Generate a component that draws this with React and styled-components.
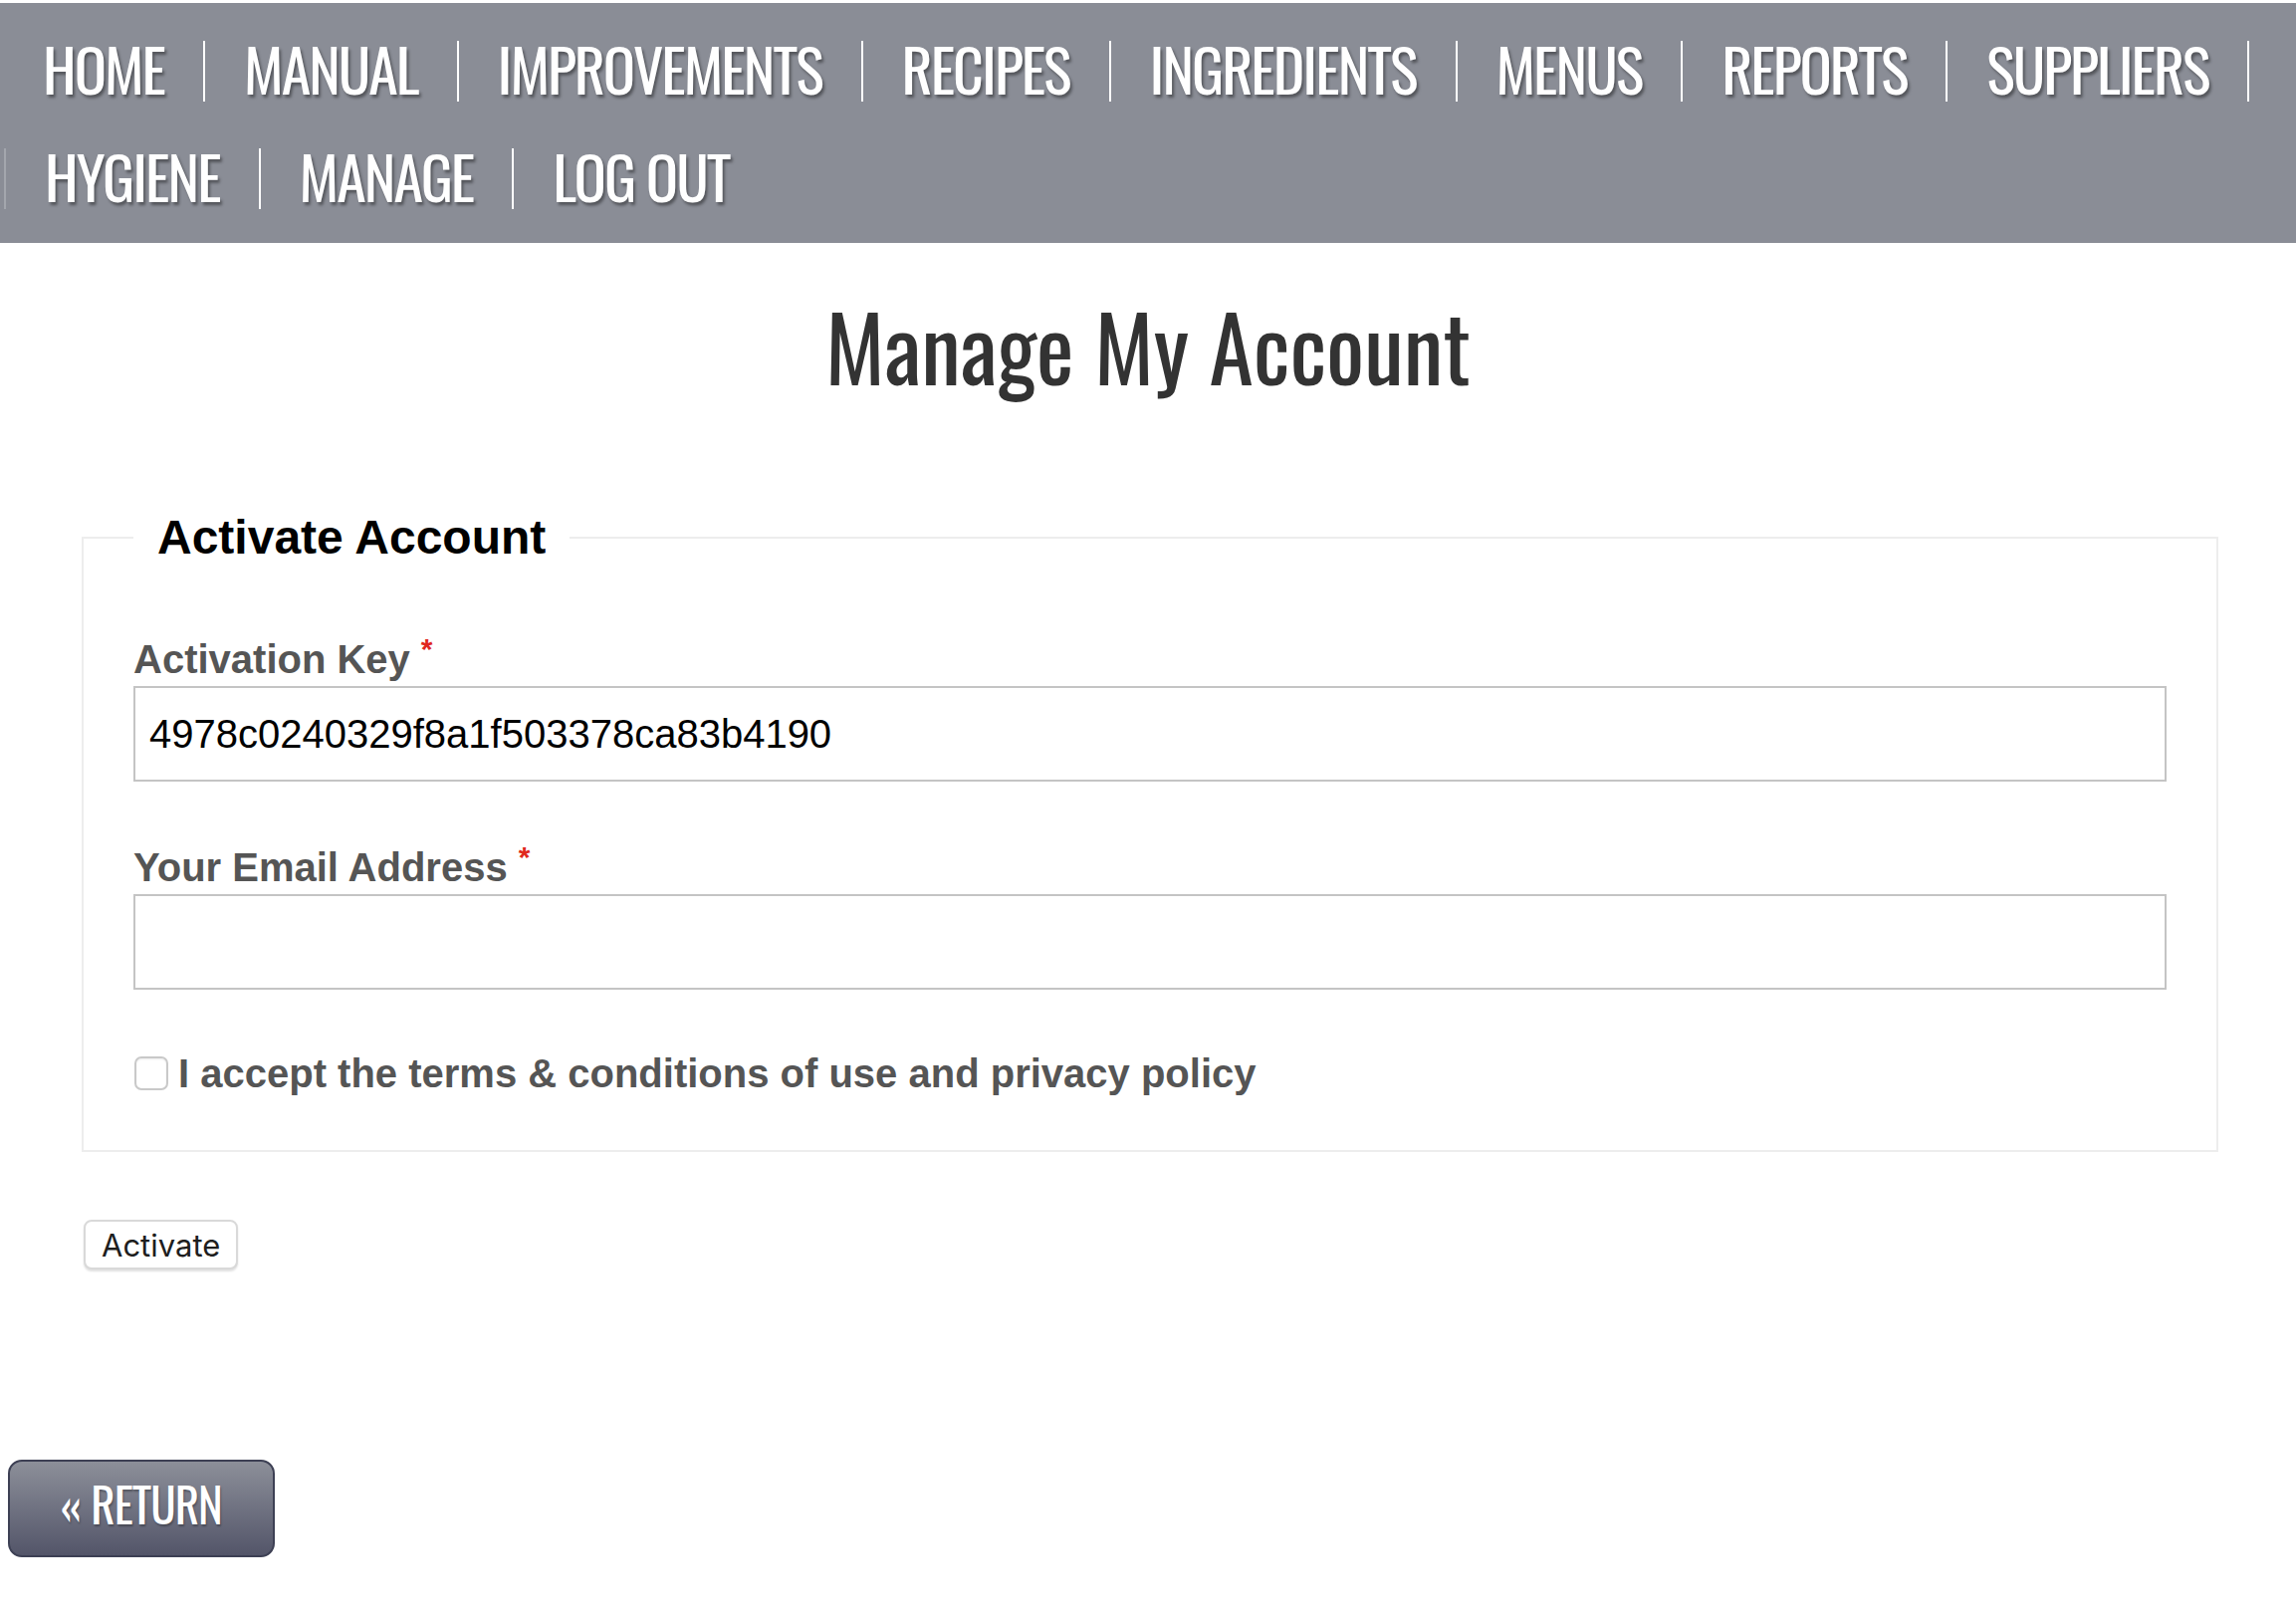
import React from "react";
import styled, { createGlobalStyle } from "styled-components";

const GlobalStyle = createGlobalStyle`
  html, body { margin: 0; padding: 0; background: #fff; }
  body { font-family: "Liberation Sans", Arial, sans-serif; }
`;

const Page = styled.div`
  padding-top: 3px;
  min-height: 1617px;
`;

const Nav = styled.nav`
  background: #8a8d96;
  display: flex;
  flex-wrap: wrap;
  row-gap: 47px;
  padding: 38px 0 34px 4px;
`;

const NavItem = styled.a`
  display: flex;
  align-items: center;
  box-sizing: border-box;
  height: 61px;
  padding: 0 39px 8px;
  border-right: 2px solid #fff;
  border-left: ${(p) => (p.$lead ? "2px solid rgba(255,255,255,0.22)" : "0")};
  font-family: "Oswald", "Open Sans", sans-serif;
  font-stretch: condensed;
  font-size: 60px;
  letter-spacing: -2px;
  line-height: 1;
  color: #fff;
  text-decoration: none;
  text-transform: uppercase;
  text-shadow: 2px 3px 3px rgba(0, 0, 0, 0.4);
  &:last-child { border-right: 0; }
`;

const Title = styled.h1`
  margin: 58px 0 0;
  text-align: center;
  font-family: "Oswald", "Open Sans", sans-serif;
  font-weight: 400;
  font-size: 90px;
  line-height: 1;
  color: #333;
`;

const Fieldset = styled.fieldset`
  margin: 120px 78px 0 82px;
  padding: 0 50px 60px;
  border: 2px solid #ededed;
`;

const Legend = styled.legend`
  padding: 0 24px;
  font-family: "Liberation Sans", Arial, sans-serif;
  font-weight: 700;
  font-size: 48px;
  line-height: 55px;
  color: #000;
`;

const Field = styled.div`
  margin-top: ${(p) => p.$top}px;
`;

const Label = styled.label`
  display: block;
  font-weight: 700;
  font-size: 40px;
  line-height: 40px;
  color: #555;
`;

const Req = styled.span`
  position: relative;
  top: -14px;
  margin-left: 11px;
  font-size: 30px;
  font-weight: 700;
  color: #e0281e;
`;

const Input = styled.input`
  display: block;
  box-sizing: border-box;
  width: 100%;
  height: 96px;
  margin-top: 3px;
  padding: 0 14px;
  border: 2px solid #c4c4c4;
  border-radius: 0;
  background: #fff;
  font-family: "Liberation Sans", Arial, sans-serif;
  font-size: 40px;
  color: #000;
  outline: none;
`;

const CheckRow = styled.label`
  display: flex;
  align-items: center;
  margin-top: 67px;
  font-weight: 700;
  font-size: 40px;
  line-height: 34px;
  color: #555;
`;

const Check = styled.input`
  appearance: none;
  box-sizing: border-box;
  width: 34px;
  height: 34px;
  margin: 0 10px 0 1px;
  border: 2px solid #c9c9c9;
  border-radius: 7px;
  background: #fff;
  box-shadow: inset 0 1px 2px rgba(0, 0, 0, 0.08);
`;

const ActivateButton = styled.button`
  display: block;
  margin: 68px 0 0 84px;
  height: 50px;
  padding: 0 16px;
  border: 2px solid #d9d9d9;
  border-radius: 8px;
  background: #fff;
  box-shadow: 0 2px 2px rgba(0, 0, 0, 0.12);
  font-family: "Inter", "Roboto", sans-serif;
  font-size: 31px;
  color: #1e1e1e;
  line-height: 1;
`;

const ReturnButton = styled.a`
  display: flex;
  align-items: center;
  justify-content: center;
  box-sizing: border-box;
  width: 268px;
  height: 98px;
  margin: 191px 0 0 8px;
  padding-bottom: 10px;
  border: 2px solid #3d4054;
  border-radius: 14px;
  background: linear-gradient(#8c8f99, #535569);
  font-family: "Oswald", "Open Sans", sans-serif;
  font-weight: 400;
  font-size: 47px;
  letter-spacing: -1px;
  line-height: 1;
  color: #fff;
  text-decoration: none;
  text-transform: uppercase;
  text-shadow: 1px 2px 2px rgba(0, 0, 0, 0.3);
`;

const navItems = [
  "Home", "Manual", "Improvements", "Recipes", "Ingredients", "Menus",
  "Reports", "Suppliers", "Hygiene", "Manage", "Log Out",
];

export default function App() {
  return (
    <Page>
      <GlobalStyle />
      <Nav>
        {navItems.map((n) => (
          <NavItem key={n} href="#" $lead={n === "Hygiene"}>{n}</NavItem>
        ))}
      </Nav>
      <Title>Manage My Account</Title>
      <form onSubmit={(e) => e.preventDefault()}>
        <Fieldset>
          <Legend>Activate Account</Legend>
          <Field $top={75}>
            <Label htmlFor="key">Activation Key<Req>*</Req></Label>
            <Input id="key" type="text" defaultValue="4978c0240329f8a1f503378ca83b4190" />
          </Field>
          <Field $top={66}>
            <Label htmlFor="email">Your Email Address<Req>*</Req></Label>
            <Input id="email" type="email" />
          </Field>
          <CheckRow>
            <Check type="checkbox" />
            I accept the terms &amp; conditions of use and privacy policy
          </CheckRow>
        </Fieldset>
        <ActivateButton type="submit">Activate</ActivateButton>
      </form>
      <ReturnButton href="#">« Return</ReturnButton>
    </Page>
  );
}
